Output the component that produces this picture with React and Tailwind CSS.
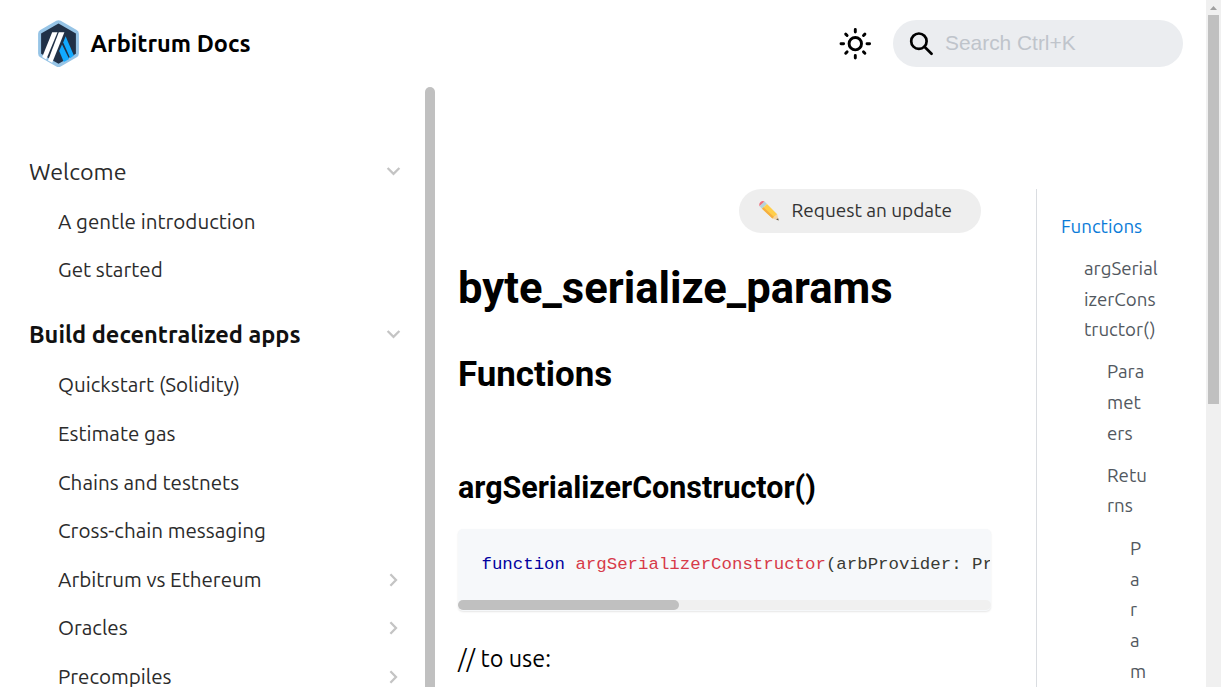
import React from "react";

const ui = "font-[Ubuntu,'Noto_Sans',sans-serif]";

function Logo() {
  return (
    <svg className="h-12 w-[43px]" viewBox="0 0.4 43 48">
      <path d="M19.3 1.2a4.4 4.4 0 0 1 4.4 0l16 9.2a4.4 4.4 0 0 1 2.2 3.8v19.6a4.4 4.4 0 0 1-2.2 3.8l-16 9.2a4.4 4.4 0 0 1-4.4 0l-16-9.2a4.4 4.4 0 0 1-2.2-3.8V14.2a4.4 4.4 0 0 1 2.2-3.8z" fill="#96c4e6" />
      <path d="M21.5 3.9L38.9 13.8V34.2L21.5 44.2L4.1 34.2V13.8z" fill="#213147" />
      <path d="M28.6 16.6L36.9 35.8L33.2 38.6L26.2 22.8z" fill="#12aaff" />
      <path d="M25 24.8L32.2 39.4L26.8 42.4L22.2 31.4z" fill="#12aaff" />
      <path d="M15.2 12.6h5.3L9.2 39.8L5.2 37.4z" fill="#fff" />
      <path d="M21.8 12.6h5.6L15.2 43.2L11 41z" fill="#fff" />
    </svg>
  );
}

function Sun() {
  return (
    <svg className="size-[34px]" viewBox="0 0 34 34" fill="none" stroke="#000" strokeWidth="2.9" strokeLinecap="round">
      <circle cx="17.3" cy="16.7" r="6.2" />
      <path d="M17.3 2.4v2.6M17.3 28.4v2.6M3 16.7h2.6M29 16.7h2.6M7.7 7.1l1.4 1.4M25.5 24.9l1.4 1.4M7.7 26.3l1.4-1.4M25.5 8.5l1.4-1.4" />
    </svg>
  );
}

function Search() {
  return (
    <svg className="size-6" viewBox="0 0 24 24" fill="none" stroke="#000">
      <circle cx="9.9" cy="9.2" r="7.7" strokeWidth="2.7" />
      <path d="M15.5 14.8l7 6.9" strokeWidth="2.7" strokeLinecap="round" />
    </svg>
  );
}

function Pencil() {
  return (
    <svg className="size-5" viewBox="0 0 20 20">
      <path d="M.6 5.2L5.6.6Q3.5-.6 1.5.9Q-.4 2.6.6 5.2z" fill="#f0707e" />
      <path d="M.6 5.2L5.6.6L8 2.9L3 7.7z" fill="#b5d3dc" />
      <path d="M3 7.7L8 2.9L18.2 13.2L13.5 17.4z" fill="#ffce4a" />
      <path d="M3 7.7L4.5 6.2L15 16L13.5 17.4z" fill="#f5ae42" />
      <path d="M13.5 17.4L18.2 13.2L19.6 19.4z" fill="#f3d3a6" />
      <path d="M17.1 18.5L19.1 17.2L19.7 19.5z" fill="#555" />
    </svg>
  );
}

function Chevron({ open }) {
  return (
    <svg className="size-4" viewBox="0 0 16 16" fill="none" stroke="#c4c4c4" strokeWidth="2.3">
      <path d={open ? "M2.6 5L8.5 10.8L14.4 5" : "M5.4 2.2L11 8L5.4 13.8"} />
    </svg>
  );
}

function Category({ label, bold }) {
  return (
    <div className="flex h-[48.6px] items-center justify-between pr-6 pl-[29px]">
      <span className={bold ? "text-[23.55px] leading-[34px] font-bold text-[#111]" : "text-[23.3px] leading-[35px] text-[#2b2b2b]"}>{label}</span>
      <Chevron open />
    </div>
  );
}

function Item({ label, more }) {
  return (
    <div className="flex h-[48.6px] items-center justify-between pr-6 pl-[58px] text-[20.6px] leading-[30px] text-[#2b2b2b]">
      <span>{label}</span>
      {more && <Chevron />}
    </div>
  );
}

export default function App() {
  return (
    <div className={`flex h-[687px] w-[1221px] overflow-hidden bg-white text-black ${ui}`}>
      <div className="flex w-[1206px] flex-col">
        <header className="flex h-[87px] shrink-0 items-center pr-[23px] pl-[37px]">
          <Logo />
          <span className="ml-[10.5px] text-[23.5px] leading-[35px] font-bold">Arbitrum Docs</span>
          <div className="ml-auto flex items-center">
            <Sun />
            <div className="ml-[21px] flex h-[47px] w-[290px] items-center rounded-full bg-[#ebedf0] pl-4 font-['Liberation_Sans',sans-serif] text-[20.9px] text-[#bfc4cb]">
              <Search />
              <span className="ml-3 pb-[2px]">Search Ctrl+K</span>
            </div>
          </div>
        </header>
        <div className="flex min-h-0 flex-1 overflow-hidden">
          <aside className="flex w-[435px] shrink-0">
            <nav className="w-[425px] pt-[60px] whitespace-nowrap">
              <Category label="Welcome" />
              <div className="pt-[1.9px] pb-[15.4px]">
                <Item label="A gentle introduction" />
                <Item label="Get started" />
              </div>
              <Category label="Build decentralized apps" bold />
              <div className="pt-[2.5px]">
                <Item label="Quickstart (Solidity)" />
                <Item label="Estimate gas" />
                <Item label="Chains and testnets" />
                <Item label="Cross-chain messaging" />
                <Item label="Arbitrum vs Ethereum" more />
                <Item label="Oracles" more />
                <Item label="Precompiles" more />
              </div>
            </nav>
            <div className="w-2.5 rounded-t-[5px] bg-[#c0c0c0]" />
          </aside>
          <main className="w-[601px] shrink-0 pt-[102px] pr-[45px] pl-[23px]">
            <div className="flex justify-end pr-[10px]">
              <button className="flex h-11 w-[242px] items-center rounded-full bg-[#eee] pl-5 text-[19px] leading-[28px] text-[#333]">
                <Pencil />
                <span className="ml-[12.5px] pb-[2px] whitespace-nowrap">Request an update</span>
              </button>
            </div>
            <h1 className="mt-[29px] font-[Roboto,sans-serif] text-[43.55px] leading-[54px] font-bold">byte_serialize_params</h1>
            <h2 className="mt-[37px] font-[Roboto,sans-serif] text-[34.9px] leading-[44px] font-bold">Functions</h2>
            <h3 className="mt-[72px] font-[Roboto,sans-serif] text-[30.45px] leading-[38px] font-bold">argSerializerConstructor()</h3>
            <div className="mt-[22px] flex h-[82px] w-[533px] flex-col overflow-hidden rounded-[5px] bg-[#f6f8fa] shadow-[0_1px_2px_0_rgba(0,0,0,0.1)]">
              <pre className="mr-px flex-1 overflow-hidden pt-[25px] pl-[23.5px] font-['Liberation_Mono',monospace] text-[17.4px] leading-[22.6px] text-[#393a34]">
                <span className="text-[#00009f]">function</span> <span className="text-[#d73a49]">argSerializerConstructor</span>(arbProvider: Provider)
              </pre>
              <div className="mb-px h-2.5 rounded-[5px] bg-[#f0f0f0]">
                <div className="h-2.5 w-[221px] rounded-[5px] bg-[#c0c0c0]" />
              </div>
            </div>
            <p className="mt-[29px] text-[23.4px] leading-[36px]">// to use:</p>
          </main>
          <aside className="mt-[102px] w-[170px] border-l border-[#dadde1] pt-[22.8px] pl-6 text-[18.7px] leading-[30.65px] whitespace-nowrap text-[#525860]">
            <div className="text-[#0a7bd8]">Functions</div>
            <div className="mt-[11.5px] pl-[23px]">argSerial<br />izerCons<br />tructor()</div>
            <div className="mt-[11.5px] pl-[46px]">Para<br />met<br />ers</div>
            <div className="mt-[11.4px] pl-[46px]">Retu<br />rns</div>
            <div className="mt-[11.8px] pl-[69px]">P<br />a<br />r<br />a<br />m</div>
          </aside>
        </div>
      </div>
      <div className="flex w-[15px] flex-col items-center bg-[#f0f0f0]">
        <svg className="h-[15px] w-[15px] shrink-0" viewBox="0 0 15 15"><path d="M4 10h7L7.5 6z" fill="#a0a0a0" /></svg>
        <div className="h-[389px] w-[11px] bg-[#c0c0c0]" />
      </div>
    </div>
  );
}
